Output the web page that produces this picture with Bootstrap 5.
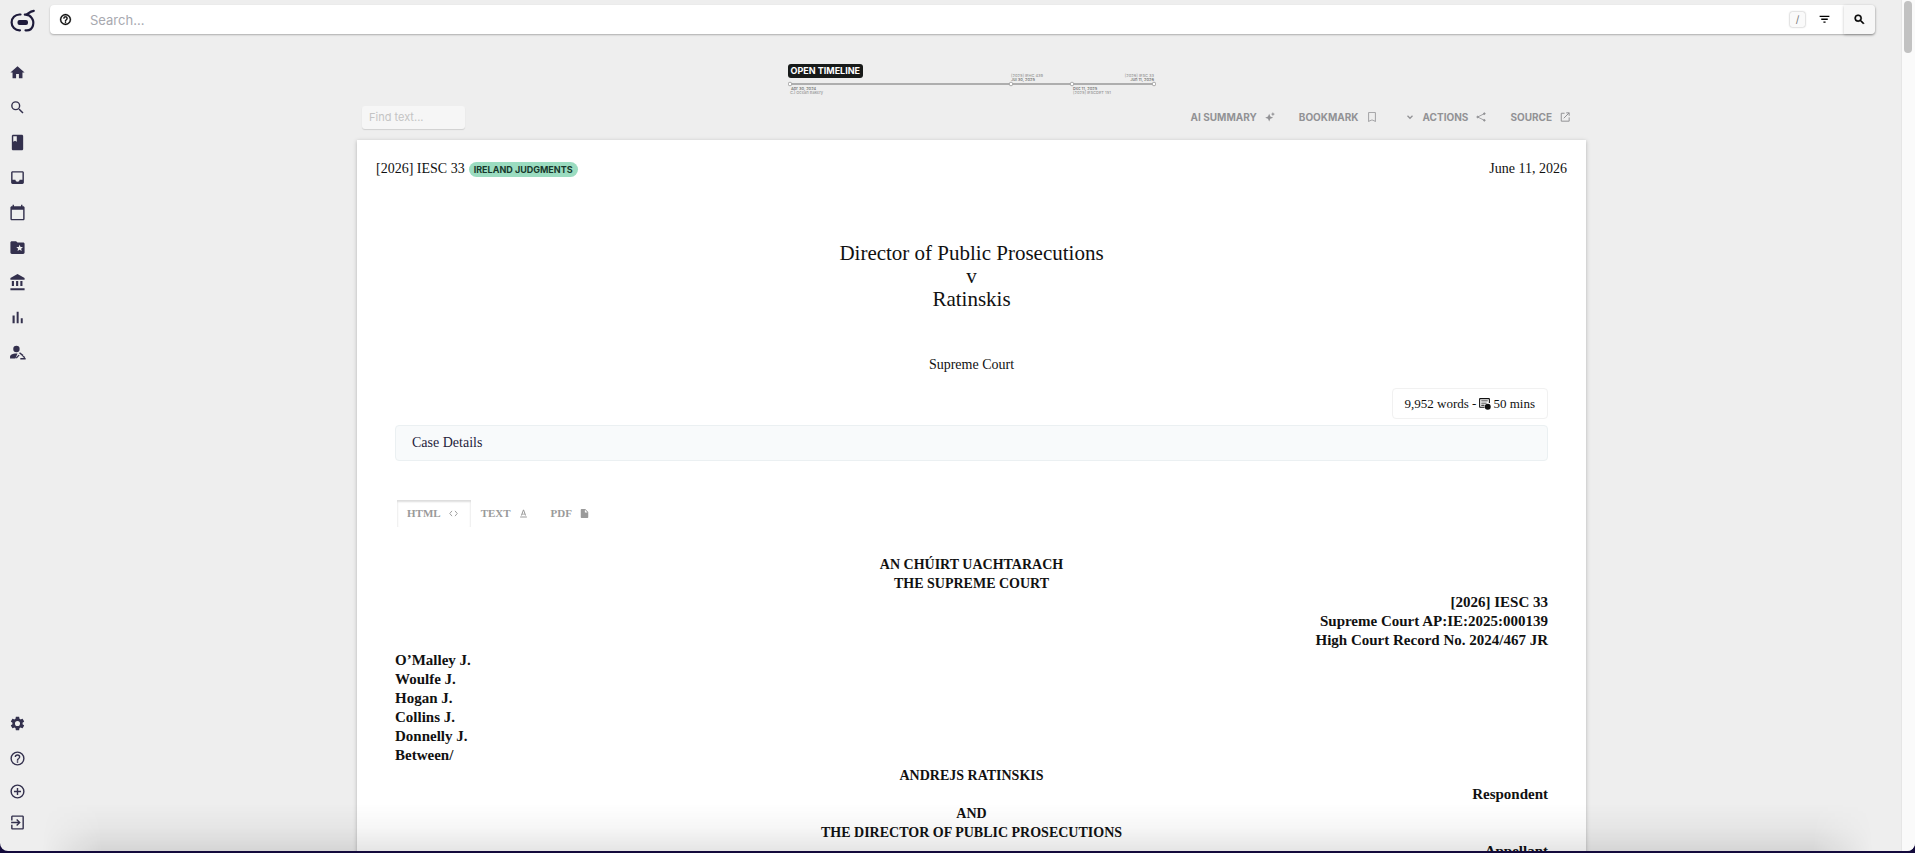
<!DOCTYPE html>
<html lang="en">
<head>
<meta charset="utf-8">
<meta name="viewport" content="width=device-width, initial-scale=1">
<title>Director of Public Prosecutions v Ratinskis</title>
<link href="https://cdn.jsdelivr.net/npm/bootstrap@5.3.0/dist/css/bootstrap.min.css" rel="stylesheet">
<style>
  :root { --ink: #33304d; --page: #eeeeee; --muted: #929295; }
  body { background: #130a3c; font-family: Inter, sans-serif; font-size: 11px; color: #111; }
  svg { display: block; flex: none; }
  svg:not([fill]) { fill: currentColor; }
  .app-frame { border-bottom: 2px solid #130a3c; }
  .app-shell { background: var(--page); border-radius: 0 0 8px 8px; }

  .rail { width: 42px; padding: 9px 0 13px 9px; }
  .rail a { color: var(--ink); height: 35px; display: flex; align-items: center; }
  .rail a svg { width: 17px; height: 17px; }
  .rail .brand-mark { height: 23px; margin-bottom: 23px; }
  .rail .brand-mark svg { width: 28px; height: 24px; }
  .rail .short-link { height: 31px; }

  .topbar { margin: 5px 26px 0 8px; height: 29px; border-radius: 4px; box-shadow: 0 1px 2px rgba(0,0,0,.28); }
  .topbar .form-control { font-size: 13px; height: 29px; padding: 0 0 0 9px; }
  .topbar .form-control::placeholder { color: #a8a9b0; }
  .bar-btn { width: 31px; height: 29px; padding: 0; border: 0; background: none; display: grid; place-items: center; }
  .go-btn { background: #f7f7f7; border-radius: 0 4px 4px 0; box-shadow: 0 1px 3px rgba(0,0,0,.25); }
  kbd.slash { width: 15px; height: 15px; padding: 0; text-align: center; background: #fafafa; color: #777; font: 10px/15px Inter, sans-serif; border-radius: 2px; box-shadow: 0 0 2px rgba(0,0,0,.4); }

  .timeline { width: 368px; height: 42px; margin-top: 29px; }
  .timeline > svg { width: 368px; height: 42px; }
  .timeline text { font: 500 4px Inter, sans-serif; fill: #6d6d6d; }
  .timeline .cite { fill: #999; }
  .open-timeline { top: 1px; left: 0; height: 14px; padding: 0 3px; border: 0; border-radius: 3px; background: #171a19; color: #fff; font-size: 9px; line-height: 14px; font-weight: 700; }

  .doc-wrap { width: 100%; max-width: 1229px; }
  .tools { height: 35px; padding: 0 4px 11px 5px; }
  .tools .form-control { width: 103px; height: 23px; font-size: 11px; padding: 0 7px; background: #f6f6f6; border: 0; border-radius: 3px; box-shadow: 0 1px 1px rgba(0,0,0,.13); }
  .tools .form-control::placeholder { color: #c4c4c4; }
  .tool-btn { border: 0; background: none; padding: 0 12px; color: var(--muted); font-size: 10px; line-height: 23px; font-weight: 700; display: flex; align-items: center; gap: 8px; }
  .tool-btn svg { width: 10px; height: 10px; }

  .paper { background: #fff; box-shadow: 0 1px 4px rgba(0,0,0,.25); font-family: "Liberation Serif", serif; color: #111; padding: 19px 19px 60px; }
  .paper-head { font-size: 14px; line-height: 20px; }
  .source-badge { font: 700 9px/15px Inter, sans-serif; background: #9bdcc0; color: #17382c; padding: 0 5px; border-radius: 8px; }
  .paper-body { padding: 0 19px; }
  .case-title { font-size: 21px; line-height: 23px; font-weight: 400; margin: 63px 0 0; }
  .court { font-size: 14px; line-height: 20px; margin: 44px 0 13px; }
  .word-count { font-size: 13px; line-height: 29px; padding: 0 12px; border: 1px solid #f1f1f1; border-radius: 4px; gap: 2px; }
  .case-details { margin-top: 6px; border: 1px solid #ebf0f2; background: #f8fafb; border-radius: 4px; font-size: 14px; line-height: 34px; padding: 0 16px; color: #25233c; text-align: left; }
  .format-tabs { margin-top: 39px; padding-left: 2px; }
  .format-tab { border: 0; background: none; height: 27px; padding: 0 13px 0 10px; font-size: 11px; font-weight: 700; color: #9a9a9a; display: flex; align-items: center; gap: 8px; }
  .format-tab svg { width: 9px; height: 9px; }
  .format-tab.active { box-shadow: inset 0 3px 2px -1px #ddd, inset 2px 0 2px -1px #eee, inset -2px 0 2px -1px #eee; }
  .judgment { margin-top: 28px; font-size: 15px; line-height: 19px; font-weight: 700; }
  .judgment section { margin-top: 1px; }
  .judgment p { margin: 0; }
  .judgment .heading-line { font-size: 14px; text-align: center; }

  .fade-edge { left: 42px; right: 42px; bottom: 0; height: 48px; pointer-events: none;
    background: linear-gradient(to top, rgba(0,0,0,.1), rgba(0,0,0,.03) 50%, transparent);
    -webkit-mask-image: linear-gradient(to right, transparent, #000 60px, #000 calc(100% - 60px), transparent); }
  .scroll-track { width: 14px; background: #fafafa; border-left: 1px solid #e6e6e6; padding: 1px 3px 0 2px; }
  .scroll-thumb { width: 8px; height: 52px; border-radius: 4px; background: #c2c2c2; }
</style>
</head>
<body>
<div class="app-frame vh-100 overflow-hidden">
<div class="app-shell position-relative d-flex h-100 overflow-hidden">

  <nav class="rail d-flex flex-column flex-shrink-0" aria-label="Main">
    <a class="brand-mark" href="#" aria-label="Dashboard">
      <svg viewBox="0 0 28 24" fill="none" stroke="#1d1a3a" stroke-width="2.2" stroke-linecap="round"><path d="M11.500 5.500H10.500a7.900 7.900 0 0 0 0 15.800h.5M16.500 21.300h1.200c7 0 8-8.500 5-12.300M15.800 5.700c3.700.3 3.700-3.200 9-3.900M16.500 5.700c2.800 0 5 1.300 6.200 3.300"/><rect x="8.500" y="11" width="10.500" height="5" rx="2" fill="#1d1a3a" stroke="none"/></svg>
    </a>
    <a href="#" aria-label="Home"><svg viewBox="0 0 24 24"><path d="M10 20v-6h4v6h5v-8h3L12 3 2 12h3v8z"/></svg></a>
    <a href="#" aria-label="Search"><svg viewBox="0 0 24 24"><path d="M15.500 14h-.79l-.28-.27A6.471 6.471 0 0 0 16 9.500 6.500 6.500 0 1 0 9.500 16c1.610 0 3.090-.59 4.230-1.570l.27.28v.79l5 4.990L20.490 19zm-6 0a4.500 4.500 0 1 1 0-9 4.500 4.500 0 0 1 0 9z"/></svg></a>
    <a href="#" aria-label="Library"><svg viewBox="0 0 24 24"><path d="M18 1H6c-1.100 0-2 .9-2 2v18c0 1.100.9 2 2 2h12c1.100 0 2-.9 2-2V3c0-1.100-.9-2-2-2zM6 3h5v8l-2.500-1.500L6 11z"/></svg></a>
    <a href="#" aria-label="Inbox"><svg viewBox="0 0 24 24"><path d="M19 3H5c-1.100 0-2 .9-2 2v14c0 1.100.9 2 2 2h14c1.100 0 2-.9 2-2V5c0-1.100-.9-2-2-2zm0 12h-4a3 3 0 0 1-6 0H5V5h14z"/></svg></a>
    <a href="#" aria-label="Calendar"><svg viewBox="0 0 24 24"><path d="M20 3h-1V1h-2v2H7V1H5v2H4c-1.100 0-2 .9-2 2v16c0 1.100.9 2 2 2h16c1.100 0 2-.9 2-2V5c0-1.100-.9-2-2-2zm0 18H4V8h16z"/></svg></a>
    <a href="#" aria-label="Saved folders"><svg viewBox="0 0 24 24"><path d="M20 5h-8l-2-2H4c-1.100 0-2 .9-2 2v14c0 1.100.9 2 2 2h16c1.100 0 2-.9 2-2V7c0-1.100-.9-2-2-2zm-2.060 12L15 15.280 12.060 17l.78-3.330-2.590-2.240 3.410-.29L15 8l1.340 3.140 3.410.29-2.590 2.240z"/></svg></a>
    <a href="#" aria-label="Courts"><svg viewBox="0 0 24 24"><path d="M4 10v7h3v-7zm6 0v7h3v-7zM2 23h20v-3H2zm14-13v7h3v-7zM12 0 2 5.500V8h20V5.500z"/></svg></a>
    <a href="#" aria-label="Statistics"><svg viewBox="0 0 24 24"><path d="M5 9.200h3V20H5zM10.800 4h2.800v16h-2.800zm5.800 9h2.800v7h-2.800z"/></svg></a>
    <a href="#" aria-label="Judges"><svg viewBox="0 0 24 24"><circle cx="10.500" cy="7" r="4.500"/><path d="M1.500 20.500v-2.700c0-2.600 4-4.500 8.500-4.500 1 0 1.500.1 2 .2L9 20.500zM15.500 11.500l5 4-1.300 1.700-5-4zM13.500 15l1.500 1-4 4.500-1.500-1zM20 16.500l3 2-1 1.500-3-2zM16 19.800h7.500V22H16z"/></svg></a>

    <a class="mt-auto" href="#" aria-label="Settings"><svg viewBox="0 0 24 24"><path d="M19.140 12.940c.04-.3.06-.61.06-.94 0-.32-.02-.64-.07-.94l2.030-1.580c.18-.14.23-.41.12-.61l-1.920-3.320c-.12-.22-.37-.29-.59-.22l-2.390.96c-.5-.38-1.030-.7-1.620-.94l-.36-2.540c-.04-.24-.24-.41-.48-.41h-3.840c-.24 0-.43.17-.47.41l-.36 2.540c-.59.24-1.130.57-1.620.94l-2.390-.96c-.22-.08-.47 0-.59.22L2.740 8.870c-.12.21-.08.47.12.61l2.030 1.580c-.05.3-.09.63-.09.94s.02.64.07.94l-2.030 1.580c-.18.14-.23.41-.12.61l1.920 3.320c.12.22.37.29.59.22l2.390-.96c.5.38 1.030.7 1.620.94l.36 2.540c.05.24.24.41.48.41h3.840c.24 0 .44-.17.47-.41l.36-2.540c.59-.24 1.130-.56 1.620-.94l2.390.96c.22.08.47 0 .59-.22l1.920-3.320c.12-.22.07-.47-.12-.61zM12 15.600a3.600 3.600 0 1 1 0-7.200 3.600 3.600 0 0 1 0 7.200z"/></svg></a>
    <a href="#" aria-label="Help"><svg viewBox="0 0 24 24"><path d="M11 18h2v-2h-2zm1-16a10 10 0 1 0 0 20 10 10 0 0 0 0-20zm0 18a8 8 0 1 1 0-16 8 8 0 0 1 0 16zm0-14a4 4 0 0 0-4 4h2a2 2 0 1 1 4 0c0 2-3 1.750-3 5h2c0-2.250 3-2.500 3-5a4 4 0 0 0-4-4z"/></svg></a>
    <a class="short-link" href="#" aria-label="Add"><svg viewBox="0 0 24 24"><path d="M13 7h-2v4H7v2h4v4h2v-4h4v-2h-4zm-1-5a10 10 0 1 0 0 20 10 10 0 0 0 0-20zm0 18a8 8 0 1 1 0-16 8 8 0 0 1 0 16z"/></svg></a>
    <a class="short-link" href="#" aria-label="Sign out"><svg viewBox="0 0 24 24"><path d="M10.090 15.590 11.500 17l5-5-5-5-1.410 1.410L12.670 11H3v2h9.670zM19 2H5c-1.110 0-2 .9-2 2v5h2V4h14v16H5v-5H3v5c0 1.100.89 2 2 2h14c1.100 0 2-.9 2-2V4c0-1.100-.9-2-2-2z"/></svg></a>
  </nav>

  <main class="flex-grow-1 d-flex flex-column overflow-hidden">
    <form class="topbar bg-white d-flex align-items-center flex-shrink-0" role="search">
      <button type="button" class="bar-btn flex-shrink-0" aria-label="Search help"><svg width="13" height="13" viewBox="0 0 24 24" stroke="currentColor" stroke-width=".6"><path d="M11 18h2v-2h-2zm1-16a10 10 0 1 0 0 20 10 10 0 0 0 0-20zm0 18a8 8 0 1 1 0-16 8 8 0 0 1 0 16zm0-14a4 4 0 0 0-4 4h2a2 2 0 1 1 4 0c0 2-3 1.750-3 5h2c0-2.250 3-2.500 3-5a4 4 0 0 0-4-4z"/></svg></button>
      <input class="form-control border-0 shadow-none bg-transparent" type="search" placeholder="Search..." aria-label="Search">
      <kbd class="slash flex-shrink-0">/</kbd>
      <button type="button" class="bar-btn flex-shrink-0 ms-1 me-1" aria-label="Filters"><svg width="13" height="13" viewBox="0 0 24 24"><path d="M10 18h4v-2.500h-4zM3 5v2.500h18V5zm3 7.700h12v-2.500H6z"/></svg></button>
      <button type="submit" class="bar-btn go-btn flex-shrink-0" aria-label="Run search"><svg width="13" height="13" viewBox="0 0 24 24" stroke="currentColor" stroke-width="1"><path d="M15.500 14h-.79l-.28-.27A6.471 6.471 0 0 0 16 9.500 6.500 6.500 0 1 0 9.500 16c1.610 0 3.090-.59 4.230-1.570l.27.28v.79l5 4.990L20.490 19zm-6 0a4.500 4.500 0 1 1 0-9 4.500 4.500 0 0 1 0 9z"/></svg></button>
    </form>

    <div class="timeline position-relative mx-auto flex-shrink-0">
      <svg viewBox="0 0 368 42" role="img" aria-label="Case timeline">
        <path d="M2 21H366" stroke="#999" stroke-width="1.500"/>
        <g fill="#fff" stroke="#999" stroke-width=".8"><circle cx="2" cy="21" r="1.800"/><circle cx="223" cy="21" r="1.800"/><circle cx="284" cy="21" r="1.800"/><circle cx="366" cy="21" r="1.800"/></g>
        <text x="3" y="27">Apr 30, 2024</text><text class="cite" x="2" y="31">CJ Ocean Bakery</text>
        <text class="cite" x="223" y="14">[2025] IEHC 439</text><text x="223" y="18">Jul 30, 2025</text>
        <text x="285" y="27">Dec 11, 2025</text><text class="cite" x="285" y="31">[2025] IESCDET 151</text>
        <text class="cite" x="366" y="14" text-anchor="end">[2026] IESC 33</text><text x="366" y="18" text-anchor="end">Jun 11, 2026</text>
      </svg>
      <button type="button" class="open-timeline position-absolute">OPEN TIMELINE</button>
    </div>

    <div class="doc-wrap mx-auto">
      <div class="tools d-flex align-items-center justify-content-between">
        <input class="form-control" type="text" placeholder="Find text..." aria-label="Find text">
        <div class="d-flex">
          <button type="button" class="tool-btn">AI SUMMARY <svg viewBox="0 0 24 24"><path d="M10 4l2.800 6.700L19.500 13.500l-6.700 2.800L10 23l-2.800-6.700L.5 13.500l6.700-2.800zM19 0l1.500 3.500L24 5l-3.500 1.500L19 10l-1.500-3.500L14 5l3.500-1.500z"/></svg></button>
          <button type="button" class="tool-btn">BOOKMARK <svg viewBox="0 0 24 24"><path d="M19 0H5c-1.100 0-2 .9-2 2v22l9-4 9 4V2c0-1.100-.9-2-2-2zm0 21-7-3-7 3V2h14z"/></svg></button>
          <button type="button" class="tool-btn ms-1"><svg viewBox="0 0 24 24" fill="none" stroke="currentColor" stroke-width="3"><path d="m6 9 6 6 6-6"/></svg>ACTIONS <svg viewBox="0 0 24 24" fill="none" stroke="currentColor" stroke-width="2"><path d="M20 4 4 12l16 8"/><g fill="currentColor"><circle cx="20" cy="4" r="2"/><circle cx="4" cy="12" r="2"/><circle cx="20" cy="20" r="2"/></g></svg></button>
          <button type="button" class="tool-btn">SOURCE <svg viewBox="0 0 24 24" fill="none" stroke="currentColor" stroke-width="2.400"><path d="M11 3H3v19h19v-9M15 2h7v7M22 2 9 15"/></svg></button>
        </div>
      </div>

      <article class="paper">
        <header class="paper-head d-flex justify-content-between align-items-center">
          <div class="d-flex align-items-center gap-1"><span>[2026] IESC 33</span><span class="source-badge">IRELAND JUDGMENTS</span></div>
          <time datetime="2026-06-11">June 11, 2026</time>
        </header>
        <div class="paper-body">
          <h1 class="case-title text-center">Director of Public Prosecutions<br>v<br>Ratinskis</h1>
          <p class="court text-center">Supreme Court</p>
          <div class="d-flex justify-content-end">
            <div class="word-count d-flex align-items-center"><span>9,952 words -</span><svg width="13" height="13" viewBox="0 0 24 24"><path d="M20 2H4c-1.100 0-2 .9-2 2v14c0 1.100.9 2 2 2h8v-2H4V4h16v7h2V4c0-1.100-.9-2-2-2zM6 6.500v1.500h12V6.500zm0 4v1.500h10v-1.500zm0 4v1.500h6v-1.500z"/><circle cx="18" cy="18" r="5.500"/></svg><span>50 mins</span></div>
          </div>
          <button type="button" class="case-details w-100 d-block">Case Details</button>
          <div class="format-tabs d-flex" role="tablist">
            <button type="button" class="format-tab active" role="tab" aria-selected="true">HTML <svg viewBox="0 0 24 24" fill="none" stroke="currentColor" stroke-width="2.500"><path d="m8 5-6 7 6 7M16 5l6 7-6 7"/></svg></button>
            <button type="button" class="format-tab" role="tab" aria-selected="false">TEXT <svg viewBox="0 0 24 24"><path d="M3 20v2.500h18V20zm6-5.200h6l1.200 2.700h2.800L13.400 2h-2.800L5 17.500h2.800zM12 4.800l2.300 7.700H9.700z"/></svg></button>
            <button type="button" class="format-tab" role="tab" aria-selected="false">PDF <svg viewBox="0 0 24 24"><path d="M4 0C2.900 0 2 .9 2 2v20c0 1.100.9 2 2 2h16c1.100 0 2-.9 2-2V8l-8-8zm9 9V2l7 7z"/></svg></button>
          </div>
          <div class="judgment">
            <p class="heading-line">AN CHÚIRT UACHTARACH</p>
            <p class="heading-line">THE SUPREME COURT</p>
            <div class="text-end"><p>[2026] IESC 33</p><p>Supreme Court AP:IE:2025:000139</p><p>High Court Record No. 2024/467 JR</p></div>
            <section><p>O’Malley J.</p><p>Woulfe J.</p><p>Hogan J.</p><p>Collins J.</p><p>Donnelly J.</p><p>Between/</p></section>
            <section>
              <p class="heading-line">ANDREJS RATINSKIS</p>
              <p class="text-end">Respondent</p>
              <p class="heading-line">AND</p>
              <p class="heading-line">THE DIRECTOR OF PUBLIC PROSECUTIONS</p>
              <p class="text-end">Appellant</p>
            </section>
          </div>
        </div>
      </article>
    </div>
  </main>

  <div class="scroll-track flex-shrink-0" aria-hidden="true"><div class="scroll-thumb"></div></div>
  <div class="fade-edge position-absolute"></div>
</div>
</div>
<script src="https://cdn.jsdelivr.net/npm/bootstrap@5.3.0/dist/js/bootstrap.bundle.min.js"></script>
</body>
</html>
